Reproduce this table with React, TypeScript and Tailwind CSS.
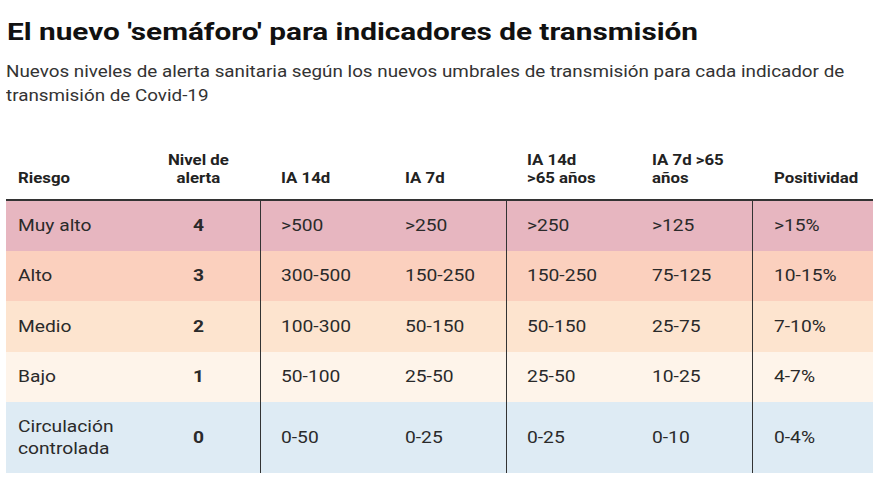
import React from "react";

const rows = [
  { bg: "bg-[#e7b6c0]", risk: "Muy alto", lvl: "4", v: [">500", ">250", ">250", ">125", ">15%"], h: "h-[50px]" },
  { bg: "bg-[#fbd0be]", risk: "Alto", lvl: "3", v: ["300-500", "150-250", "150-250", "75-125", "10-15%"], h: "h-[50px]" },
  { bg: "bg-[#fde4cf]", risk: "Medio", lvl: "2", v: ["100-300", "50-150", "50-150", "25-75", "7-10%"], h: "h-[51px]" },
  { bg: "bg-[#fef4ea]", risk: "Bajo", lvl: "1", v: ["50-100", "25-50", "25-50", "10-25", "4-7%"], h: "h-[50px]" },
  { bg: "bg-[#deebf4]", risk: "Circulación controlada", lvl: "0", v: ["0-50", "0-25", "0-25", "0-10", "0-4%"], h: "h-[71px]" },
];

const cols = "grid grid-cols-[131px_123px_124px_122px_125px_121px_121px]";
const S = "inline-block origin-left scale-x-[1.2]";
const SC = "inline-block origin-center scale-x-[1.2]";

export default function App() {
  return (
    <div className="w-[880px] h-[495px] bg-white font-['Roboto',sans-serif] text-[#222] overflow-hidden">
      <h1 className="pt-[18px] pl-[7px] text-[24.8px] leading-[28px] font-bold text-[#111]">
        <span className={S}>El nuevo 'semáforo' para indicadores de transmisión</span>
      </h1>
      <p className="mt-[14px] pl-[6px] text-[15.7px] leading-[24px] text-[#333]">
        <span className="block w-[715px] origin-left scale-x-[1.2]">
          Nuevos niveles de alerta sanitaria según los nuevos umbrales de transmisión para cada indicador de transmisión de Covid-19
        </span>
      </p>
      <div className="ml-[6px] mt-[43px] w-[867px]">
        <div className={`${cols} items-end border-b-2 border-[#333] text-[14px] leading-[18px] font-bold text-[#222]`}>
          <div className="pl-[12px] pb-[12px]"><span className={S}>Riesgo</span></div>
          <div className="pb-[12px] text-center"><span className={SC}>Nivel de<br />alerta</span></div>
          <div className="pl-[21px] pb-[12px]"><span className={S}>IA 14d</span></div>
          <div className="pl-[21px] pb-[12px]"><span className={S}>IA 7d</span></div>
          <div className="pl-[21px] pb-[12px]"><span className={S}>IA 14d<br />&gt;65 años</span></div>
          <div className="pl-[21px] pb-[12px]"><span className={S}>IA 7d &gt;65<br />años</span></div>
          <div className="pl-[22px] pb-[12px]"><span className={S}>Positividad</span></div>
        </div>
        {rows.map((r) => (
          <div key={r.risk} className={`${cols} ${r.bg} ${r.h} text-[16px] leading-[22px] text-[#2a2a2a]`}>
            <div className="pl-[12px] flex items-center">
              <span className={S}>{r.risk === "Circulación controlada" ? <>Circulación<br />controlada</> : r.risk}</span>
            </div>
            <div className="flex items-center justify-center font-bold"><span className={SC}>{r.lvl}</span></div>
            <div className="border-l border-[#333] pl-[20px] flex items-center"><span className={S}>{r.v[0]}</span></div>
            <div className="pl-[21px] flex items-center"><span className={S}>{r.v[1]}</span></div>
            <div className="border-l border-[#333] pl-[20px] flex items-center"><span className={S}>{r.v[2]}</span></div>
            <div className="pl-[21px] flex items-center"><span className={S}>{r.v[3]}</span></div>
            <div className="border-l border-[#333] pl-[21px] flex items-center"><span className={S}>{r.v[4]}</span></div>
          </div>
        ))}
      </div>
    </div>
  );
}
